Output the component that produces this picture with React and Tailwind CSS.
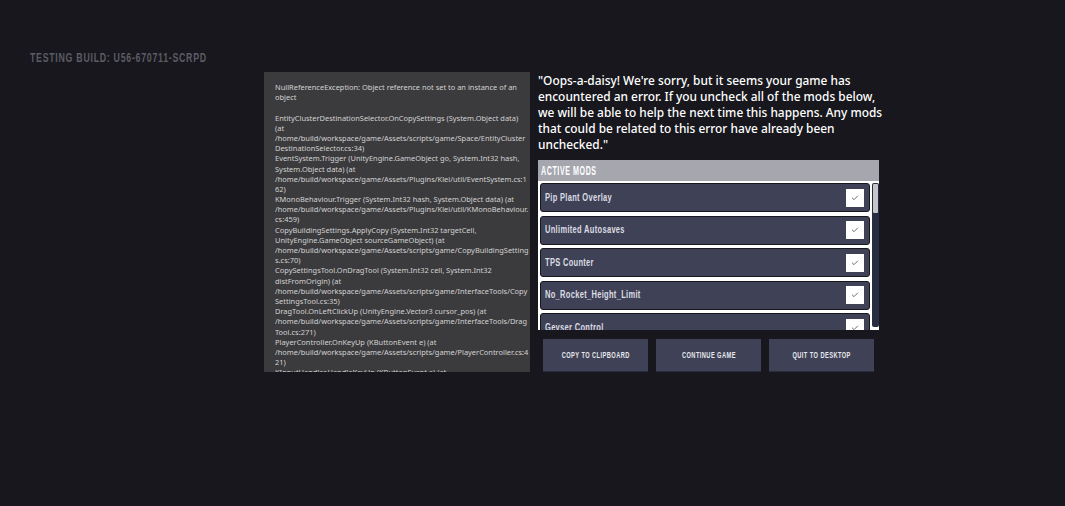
import { Check } from 'lucide-react';

const PIXEL_FONT = "font-['Liberation_Sans',sans-serif]";

const LOG_LINES = [
    "NullReferenceException: Object reference not set to an instance of an",
    "object",
    "",
    "EntityClusterDestinationSelector.OnCopySettings (System.Object data)",
    "(at",
    "/home/build/workspace/game/Assets/scripts/game/Space/EntityCluster",
    "DestinationSelector.cs:34)",
    "EventSystem.Trigger (UnityEngine.GameObject go, System.Int32 hash,",
    "System.Object data) (at",
    "/home/build/workspace/game/Assets/Plugins/Klei/util/EventSystem.cs:1",
    "62)",
    "KMonoBehaviour.Trigger (System.Int32 hash, System.Object data) (at",
    "/home/build/workspace/game/Assets/Plugins/Klei/util/KMonoBehaviour.",
    "cs:459)",
    "CopyBuildingSettings.ApplyCopy (System.Int32 targetCell,",
    "UnityEngine.GameObject sourceGameObject) (at",
    "/home/build/workspace/game/Assets/scripts/game/CopyBuildingSetting",
    "s.cs:70)",
    "CopySettingsTool.OnDragTool (System.Int32 cell, System.Int32",
    "distFromOrigin) (at",
    "/home/build/workspace/game/Assets/scripts/game/InterfaceTools/Copy",
    "SettingsTool.cs:35)",
    "DragTool.OnLeftClickUp (UnityEngine.Vector3 cursor_pos) (at",
    "/home/build/workspace/game/Assets/scripts/game/InterfaceTools/Drag",
    "Tool.cs:271)",
    "PlayerController.OnKeyUp (KButtonEvent e) (at",
    "/home/build/workspace/game/Assets/scripts/game/PlayerController.cs:4",
    "21)",
    "KInputHandler.HandleKeyUp (KButtonEvent e) (at",
];

const MODS = [
    "Pip Plant Overlay",
    "Unlimited Autosaves",
    "TPS Counter",
    "No_Rocket_Height_Limit",
    "Geyser Control",
];

const BUTTONS = ["COPY TO CLIPBOARD", "CONTINUE GAME", "QUIT TO DESKTOP"];

function ModRow({ name }) {
    return (
        <div className="h-[29px] shrink-0 flex items-center justify-between pl-[4px] pr-[5px] bg-[#3f4257] rounded-[3px] border border-[#17171d]">
            <span className={`${PIXEL_FONT} inline-block whitespace-nowrap origin-left scale-x-[0.65] font-bold text-[11.5px] tracking-[0.5px] text-[#dcdce2]`}>{name}</span>
            <span className="w-[18px] h-[18px] bg-white flex items-center justify-center">
                <Check size={8} strokeWidth={3} className="text-[#6e6e7a]" />
            </span>
        </div>
    );
}

export default function App() {
    return (
        <div className="w-[1065px] h-[506px] bg-[#17171d] overflow-hidden font-['Noto_Sans',sans-serif]">
            <div className={`${PIXEL_FONT} pt-[50px] pl-[30px] h-[72px] text-[13.5px] leading-[15px] tracking-[1.1px] font-bold text-[#5c5c64]`}>
                <span className="inline-block whitespace-nowrap origin-left scale-x-[0.652]">TESTING BUILD: U56-670711-SCRPD</span>
            </div>
            <div className="flex gap-[8px] pl-[264px]">
                <div className="w-[266px] h-[300px] bg-[#3b3b3d] overflow-hidden pl-[11px] pt-[10px] text-[7.45px] leading-[10.2px] text-[#d2d2d2] whitespace-pre">
                    {LOG_LINES.map((line, idx) => (
                        <div key={idx} className="h-[10.2px]">{line}</div>
                    ))}
                </div>
                <div className="w-[341px] flex flex-col">
                    <p className="h-[88px] text-[11.9px] leading-[16px] text-white whitespace-pre font-medium">
                        {"\"Oops-a-daisy! We're sorry, but it seems your game has\nencountered an error. If you uncheck all of the mods below,\nwe will be able to help the next time this happens. Any mods\nthat could be related to this error have already been\nunchecked.\""}
                    </p>
                    <div className="h-[170px] overflow-hidden bg-white flex flex-col">
                        <div className={`${PIXEL_FONT} h-[21px] shrink-0 bg-[#a5a6ae] pl-[3px] flex items-center font-bold text-[12px] tracking-[1px] text-white`}>
                            <span className="inline-block whitespace-nowrap origin-left scale-x-[0.59]">ACTIVE MODS</span>
                        </div>
                        <div className="flex pt-[2px] pl-[2px] gap-[2px] min-h-0 flex-1">
                            <div className="w-[330px] flex flex-col gap-[3.5px] overflow-hidden">
                                {MODS.map((name) => (
                                    <ModRow key={name} name={name} />
                                ))}
                            </div>
                            <div className="w-[7px] h-[144px] bg-[#262c42] rounded-[2px] p-[1px]">
                                <div className="h-[29px] bg-[#c6c6ca] rounded-[1px]"></div>
                            </div>
                        </div>
                    </div>
                    <div className="flex gap-[8px] pl-[5px] pt-[9px]">
                        {BUTTONS.map((label) => (
                            <button
                                key={label}
                                className={`${PIXEL_FONT} w-[105px] h-[33px] bg-[#3f4257] border-b border-[#2a2c3c] font-bold text-[9.5px] tracking-[0.7px] text-[#e8e8ec] flex items-center justify-center`}
                            >
                                <span className="inline-block whitespace-nowrap scale-x-[0.6]">{label}</span>
                            </button>
                        ))}
                    </div>
                </div>
            </div>
        </div>
    );
}
